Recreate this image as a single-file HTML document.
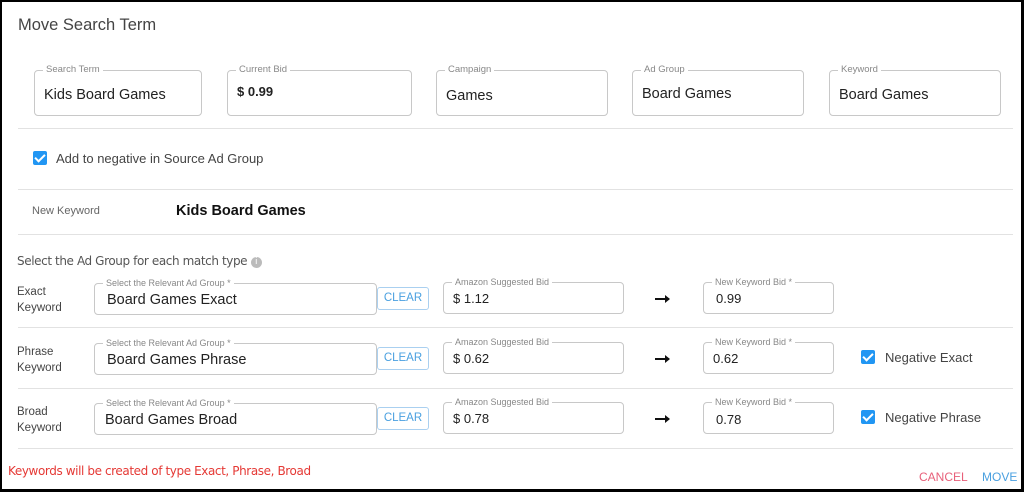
<!DOCTYPE html>
<html><head><style>
*{box-sizing:border-box;margin:0;padding:0}
body{width:1024px;height:492px;background:#000;position:relative;overflow:hidden;font-family:"Liberation Sans",Arial,sans-serif}
#m{position:absolute;left:2px;top:2px;width:1019px;height:487px;background:#fff}
.box{position:absolute;border:1px solid #c8c8c8;border-radius:4px}
.lb{position:absolute;top:-7px;left:8px;background:#fff;padding:0 3px;font-size:9.5px;color:#888;line-height:12px;white-space:nowrap}
.v{position:absolute;left:9px;font-size:14.5px;color:#222;font-family:"Liberation Sans",sans-serif}
.hr{position:absolute;left:16px;width:995px;height:1px;background:#e2e2e2}
.cb{position:absolute;width:14px;height:14px;background:#2196f3;border-radius:2px}
.cb:after{content:"";position:absolute;left:4px;top:1px;width:4px;height:8px;border:solid #fff;border-width:0 2px 2px 0;transform:rotate(45deg)}
.t{position:absolute;font-size:13px;color:#444;white-space:nowrap}
.clr{position:absolute;border:1px solid #aad0f0;border-radius:3px;color:#4aa0e0;font-size:11.5px;text-align:center;line-height:21px;width:52px;height:23px}
.ar{position:absolute;width:14px;height:2px;background:#111}
.ar:after{content:"";position:absolute;right:-1px;top:-3px;border-left:5px solid #111;border-top:4px solid transparent;border-bottom:4px solid transparent}
</style></head><body><div id="m">
<div class="t" style="left:16px;top:14px;font-size:16.5px;color:#444">Move Search Term</div>

<div class="box" style="left:32px;top:68px;width:168px;height:46px"><div class="lb">Search Term</div><div class="v" style="top:16px">Kids Board Games</div></div>
<div class="box" style="left:225px;top:68px;width:185px;height:46px"><div class="lb">Current Bid</div><div class="v" style="top:13px;font-weight:bold;font-size:13px">$ 0.99</div></div>
<div class="box" style="left:434px;top:68px;width:172px;height:46px"><div class="lb">Campaign</div><div class="v" style="top:17px">Games</div></div>
<div class="box" style="left:630px;top:68px;width:172px;height:46px"><div class="lb">Ad Group</div><div class="v" style="top:15px">Board Games</div></div>
<div class="box" style="left:827px;top:68px;width:172px;height:46px"><div class="lb">Keyword</div><div class="v" style="top:16px">Board Games</div></div>

<div class="hr" style="top:126px"></div>
<div class="cb" style="left:31px;top:149px"></div>
<div class="t" style="left:54px;top:149px">Add to negative in Source Ad Group</div>
<div class="hr" style="top:187px"></div>
<div class="t" style="left:30px;top:203px;font-size:11px;color:#666">New Keyword</div>
<div class="t" style="left:174px;top:201px;font-weight:bold;font-size:14.5px;color:#111">Kids Board Games</div>
<div class="hr" style="top:232px"></div>
<div class="t" style="left:15px;top:252px;color:#555;font-family:'DejaVu Sans',sans-serif;font-size:12px;letter-spacing:-0.4px">Select the Ad Group for each match type <span style="display:inline-block;width:11px;height:11px;border-radius:50%;background:#bbb;color:#fff;font-size:9px;text-align:center;line-height:11px;vertical-align:1px">i</span></div>

<div class="t" style="left:15px;top:282px;font-size:11.5px;line-height:16px;color:#444">Exact<br>Keyword</div>
<div class="box" style="left:92px;top:281px;width:283px;height:32px"><div class="lb" style="font-size:9px">Select the Relevant Ad Group *</div><div class="v" style="top:8px;left:12px">Board Games Exact</div></div>
<div class="clr" style="left:375px;top:285px">CLEAR</div>
<div class="box" style="left:441px;top:280px;width:181px;height:32px"><div class="lb" style="font-size:9px">Amazon Suggested Bid</div><div class="v" style="top:8px;font-size:13px">$ 1.12</div></div>
<div class="ar" style="left:653px;top:296px"></div>
<div class="box" style="left:701px;top:280px;width:131px;height:32px"><div class="lb" style="font-size:9px">New Keyword Bid *</div><div class="v" style="top:8px;left:12px;font-size:13px">0.99</div></div>
<div class="hr" style="top:325px"></div>

<div class="t" style="left:15px;top:342px;font-size:11.5px;line-height:16px;color:#444">Phrase<br>Keyword</div>
<div class="box" style="left:92px;top:341px;width:283px;height:32px"><div class="lb" style="font-size:9px">Select the Relevant Ad Group *</div><div class="v" style="top:8px;left:12px">Board Games Phrase</div></div>
<div class="clr" style="left:375px;top:345px">CLEAR</div>
<div class="box" style="left:441px;top:340px;width:181px;height:32px"><div class="lb" style="font-size:9px">Amazon Suggested Bid</div><div class="v" style="top:8px;font-size:13px">$ 0.62</div></div>
<div class="ar" style="left:653px;top:356px"></div>
<div class="box" style="left:701px;top:340px;width:131px;height:32px"><div class="lb" style="font-size:9px">New Keyword Bid *</div><div class="v" style="top:8px;font-size:13px">0.62</div></div>
<div class="cb" style="left:859px;top:348px"></div>
<div class="t" style="left:883px;top:348px">Negative Exact</div>
<div class="hr" style="top:386px"></div>

<div class="t" style="left:15px;top:402px;font-size:11.5px;line-height:16px;color:#444">Broad<br>Keyword</div>
<div class="box" style="left:92px;top:401px;width:283px;height:32px"><div class="lb" style="font-size:9px">Select the Relevant Ad Group *</div><div class="v" style="top:8px;left:10px">Board Games Broad</div></div>
<div class="clr" style="left:375px;top:405px">CLEAR</div>
<div class="box" style="left:441px;top:400px;width:181px;height:32px"><div class="lb" style="font-size:9px">Amazon Suggested Bid</div><div class="v" style="top:8px;font-size:13px">$ 0.78</div></div>
<div class="ar" style="left:653px;top:416px"></div>
<div class="box" style="left:701px;top:400px;width:131px;height:32px"><div class="lb" style="font-size:9px">New Keyword Bid *</div><div class="v" style="top:9px;left:12px;font-size:13px">0.78</div></div>
<div class="cb" style="left:859px;top:408px"></div>
<div class="t" style="left:883px;top:408px">Negative Phrase</div>
<div class="hr" style="top:446px"></div>

<div class="t" style="left:6px;top:462px;color:#e53935;font-size:12px;font-family:'DejaVu Sans',sans-serif;letter-spacing:-0.4px">Keywords will be created of type Exact, Phrase, Broad</div>
<div class="t" style="left:917px;top:468px;color:#e8607a;font-size:12px">CANCEL</div>
<div class="t" style="left:980px;top:468px;color:#4aa0e0;font-size:12px">MOVE</div>
</div></body></html>
